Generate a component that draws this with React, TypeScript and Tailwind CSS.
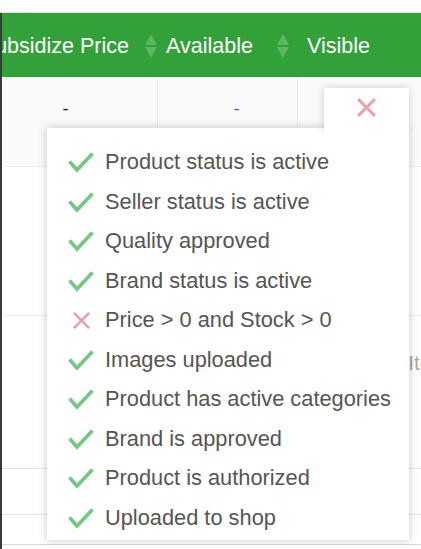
import React from 'react';

const checks = [
  { label: 'Product status is active', ok: true },
  { label: 'Seller status is active', ok: true },
  { label: 'Quality approved', ok: true },
  { label: 'Brand status is active', ok: true },
  { label: 'Price > 0 and Stock > 0', ok: false },
  { label: 'Images uploaded', ok: true },
  { label: 'Product has active categories', ok: true },
  { label: 'Brand is approved', ok: true },
  { label: 'Product is authorized', ok: true },
  { label: 'Uploaded to shop', ok: true },
];

function CheckIcon() {
  return (
    <svg width="26" height="21" viewBox="0 0 26 21" fill="none">
      <path d="M1.5 9.5 L9 18 L24.5 1.5" stroke="#74c886" strokeWidth="3.6" strokeLinejoin="miter" />
    </svg>
  );
}

function CrossIcon({ size = 22 }: { size?: number }) {
  return (
    <svg width={size} height={size} viewBox="0 0 22 22" fill="none">
      <path d="M3 3 L19 19 M19 3 L3 19" stroke="#e8a2aa" strokeWidth="2.8" />
    </svg>
  );
}

function SortIcon() {
  return (
    <span className="flex flex-col items-center gap-[2px]">
      <span className="h-0 w-0 border-x-[6px] border-b-[11px] border-x-transparent border-b-[#5cb862]" />
      <span className="h-0 w-0 border-x-[6px] border-t-[11px] border-x-transparent border-t-[#5cb862]" />
    </span>
  );
}

export default function App() {
  return (
    <div
      className="relative h-[549px] w-[421px] overflow-hidden bg-white"
      style={{ fontFamily: '"Liberation Sans", Arial, sans-serif' }}
    >
      <div className="h-[13px] border-b border-[#dfe6df] bg-white" />
      <div className="flex h-[548px] border-l-2 border-[#3a3a3a]">
        <div className="flex-1 overflow-hidden">
          {/* header */}
          <div className="flex h-[64px] items-center bg-[#33a13a] pt-[2px] text-[21.5px] text-white">
            <div className="flex w-[156px] items-center justify-end gap-[16px] overflow-hidden pr-[1px]">
              <span className="whitespace-nowrap">Subsidize Price</span>
              <SortIcon />
            </div>
            <div className="flex w-[140px] items-center justify-between pl-[8px] pr-[9px]">
              <span>Available</span>
              <SortIcon />
            </div>
            <div className="pl-[9px]">Visible</div>
          </div>
          {/* row 1 */}
          <div className="flex h-[90px] border-b border-[#eeeeee] bg-[#fafafa]">
            <div className="w-[156px] border-r border-[#ececec] pr-[28px] pt-[19px] text-center text-[18px] text-[#222]">
              -
            </div>
            <div className="w-[140px] border-r border-[#ececec] pt-[19px] text-center text-[18px] text-[#3b6fd8]">
              <span className="pl-[18px]">-</span>
            </div>
            <div className="flex-1" />
          </div>
          {/* row 2 */}
          <div className="h-[149px] border-b border-[#eeeeee] bg-white" />
          {/* row 3 */}
          <div className="flex h-[153px] justify-end border-b border-[#e4e4e4] bg-white pt-[31px]">
            <span className="mr-[-28px] text-[21px] text-[#aaa]">Item</span>
          </div>
          <div className="h-[46px] border-b border-[#e4e4e4] bg-white" />
          <div className="h-[30px] border-b border-[#d8d8d8] bg-white" />
        </div>
      </div>

      {/* popover */}
      <div className="absolute left-[47px] top-[128px] w-[362px] bg-white pb-[2px] pl-[21px] pt-[15px] shadow-[0_0_9px_rgba(0,0,0,0.22)]">
        <ul className="flex flex-col">
          {checks.map((c) => (
            <li key={c.label} className="flex h-[39.5px] items-center gap-[11px] text-[21.8px] text-[#555]">
              <span className="flex w-[26px] justify-center">
                {c.ok ? <CheckIcon /> : <CrossIcon size={21} />}
              </span>
              <span className="whitespace-nowrap">{c.label}</span>
            </li>
          ))}
        </ul>
      </div>

      {/* popover trigger cell */}
      <div className="absolute left-[324px] top-[88px] flex h-[44px] w-[85px] justify-center bg-white pt-[8px] shadow-[0_0_8px_rgba(0,0,0,0.18)] [clip-path:inset(-12px_-12px_0_-12px)]">
        <CrossIcon size={23} />
      </div>
    </div>
  );
}
